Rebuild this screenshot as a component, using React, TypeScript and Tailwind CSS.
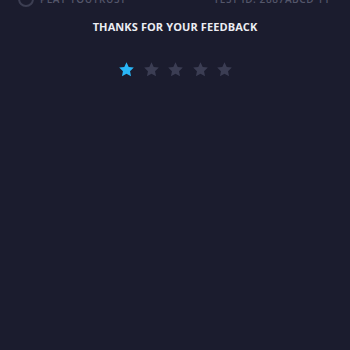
import React from 'react';

const Star = ({ active }: { active: boolean }) => (
  <svg width="17" height="17" viewBox="0 0 24 24" className={active ? 'fill-[#29b6f6]' : 'fill-[#3b3d53]'}>
    <path d="M12 1.8l3.1 6.6 7.2.9-5.3 5 1.4 7.1L12 17.9l-6.4 3.5L7 14.3l-5.3-5 7.2-.9z" />
  </svg>
);

export default function App() {
  return (
    <div className="w-[350px] h-[350px] overflow-hidden bg-[#1b1c2e] font-['Open_Sans',sans-serif]">
      <div className="flex items-center justify-between pl-[18px] pr-[20px] h-[20px] -mt-[11px]">
        <div className="flex items-center gap-[6px]">
          <div className="w-[16px] h-[16px] rounded-full border-2 border-[#3c3e52]" />
          <span className="text-[10px] font-semibold tracking-[0.6px] text-[#54566a] uppercase">Play Youtrust</span>
        </div>
        <span className="text-[10px] font-semibold tracking-[0.6px] text-[#54566a] uppercase">Test ID: 2887ABCD 11</span>
      </div>
      <h1 className="mt-[10px] text-center text-[11px] leading-[16px] font-bold text-[#ecedf3] tracking-[0.1px]">
        THANKS FOR YOUR FEEDBACK
      </h1>
      <div className="mt-[26px] flex justify-center gap-[7.5px] pl-[1px]">
        {[0, 1, 2, 3, 4].map(i => (
          <Star key={i} active={i === 0} />
        ))}
      </div>
    </div>
  );
}
